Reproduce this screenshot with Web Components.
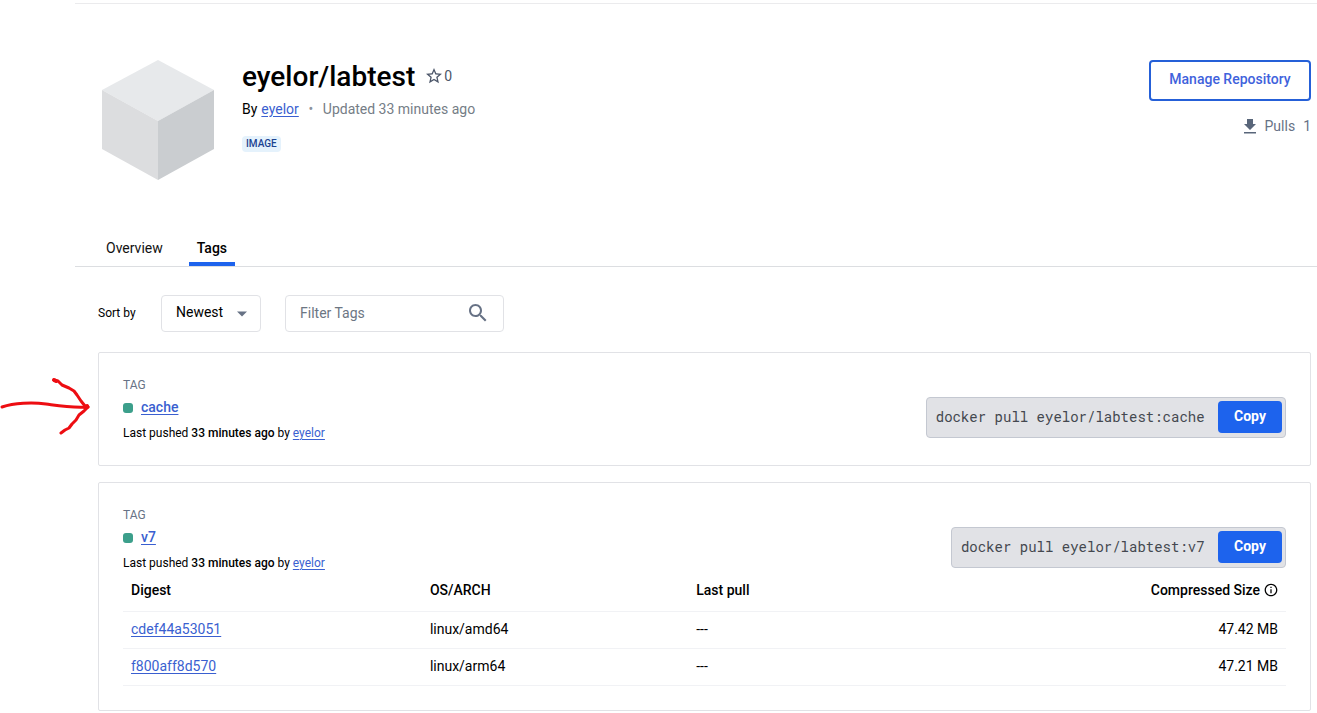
<!DOCTYPE html>
<html lang="en">
<head>
<meta charset="utf-8">
<meta name="viewport" content="width=device-width, initial-scale=1">
<title>eyelor/labtest - Tags</title>
<style>
  body {
    margin: 0;
    background: #fff;
    color: #000;
    font: 400 14px/20px Roboto, "Liberation Sans", sans-serif;
    --link: #3a5fd0;
    --brand: #1d63ed;
    --muted: #677285;
    --line: #e1e2e6;
  }
</style>
</head>
<body>
<hub-page>
  <repo-header slot="header" name="eyelor/labtest" owner="eyelor" updated="33 minutes ago" stars="0" pulls="1"></repo-header>
  <repo-tabs slot="tabs"></repo-tabs>
  <tag-toolbar></tag-toolbar>
  <tag-card tag="cache" repo="eyelor/labtest" owner="eyelor" pushed="33 minutes ago"></tag-card>
  <tag-card tag="v7" repo="eyelor/labtest" owner="eyelor" pushed="33 minutes ago">
    <digest-table></digest-table>
  </tag-card>
  <hand-arrow slot="note"></hand-arrow>
</hub-page>

<script>
class Base extends HTMLElement {
  connectedCallback() {
    if (this.shadowRoot) return;
    this.attachShadow({ mode: 'open' }).innerHTML =
      `<style>*{box-sizing:border-box} a{color:var(--link);text-underline-offset:2px}
       button,input,select{font:inherit;margin:0} svg{display:block}</style>` + this.render();
  }
  at(n) { return this.getAttribute(n); }
}

customElements.define('hub-page', class extends Base {
  render() { return `
    <style>
      :host { display: block; position: relative; padding: 3px 0 0 75px; }
      main { border-top: 1px solid #ebebed; }
      .list { display: flex; flex-direction: column; gap: 16px; padding: 28px 6px 2px 23px; }
      ::slotted(tag-toolbar) { margin-bottom: 4px; }
    </style>
    <main>
      <slot name="header"></slot>
      <slot name="tabs"></slot>
      <div class="list"><slot></slot></div>
    </main>
    <slot name="note"></slot>`; }
});

customElements.define('repo-header', class extends Base {
  render() { return `
    <style>
      :host { display: flex; align-items: flex-start; padding: 56px 6px 50px 27px; }
      .cube { width: 112px; height: 120px; flex: none; }
      .info { flex: 1; padding-left: 28px; }
      .title { display: flex; align-items: center; gap: 11px; }
      h1 { margin: 0; font-size: 28px; line-height: 34px; font-weight: 500; }
      .star { display: flex; align-items: center; gap: 2px; padding: 0 0 2px; border: 0; background: none; color: #4c5669; }
      .by { display: flex; margin: 4px 0 0; line-height: 22px; }
      .by a { margin-left: 4px; }
      .muted { color: #757d86; }
      .dot { width: 24px; text-align: center; color: #8b929c; font-size: 14px; }
      .badge { display: inline-block; margin-top: 16px; padding: 0 4px; border-radius: 4px;
        background: #e5f2fc; color: #1c4391; font-size: 10px; line-height: 16px; font-weight: 500; }
      .side { display: flex; flex-direction: column; align-items: flex-end; gap: 15px; }
      .manage { height: 41px; width: 162px; padding: 0 0 4px; border: 2px solid #2560d8; border-radius: 4px;
        background: #fff; color: #3f62dc; font-weight: 500; }
      .pulls { display: flex; align-items: center; gap: 8px; color: var(--muted); }
    </style>
    <svg class="cube" viewBox="0 0 112 120" aria-hidden="true">
      <path fill="#e7e9eb" d="M56 0l56 30-56 31L0 30z"/>
      <path fill="#dcdddf" d="M0 30l56 31v59L0 89z"/>
      <path fill="#cacdd0" d="M112 30L56 61v59l56-31z"/>
    </svg>
    <div class="info">
      <div class="title">
        <h1>${this.at('name')}</h1>
        <button class="star" aria-label="Star">
          <svg width="16" height="16" viewBox="2 2 20 20" fill="currentColor"><path d="M22 9.24l-7.19-.62L12 2 9.19 8.63 2 9.24l5.46 4.73L5.82 21 12 17.27 18.18 21l-1.63-7.03L22 9.24zM12 15.4l-3.76 2.27 1-4.28-3.32-2.88 4.38-.38L12 6.1l1.71 4.04 4.38.38-3.32 2.88 1 4.28L12 15.4z"/></svg>
          <span>${this.at('stars')}</span>
        </button>
      </div>
      <p class="by"><span>By</span><a href="#">${this.at('owner')}</a><span class="dot">•</span><span class="muted">Updated ${this.at('updated')}</span></p>
      <span class="badge">IMAGE</span>
    </div>
    <div class="side">
      <button class="manage">Manage Repository</button>
      <div class="pulls">
        <svg width="14" height="15" viewBox="0 0 14 15" fill="#59667a"><path d="M4 0h6v5h3L7 11 1 5h3zM1 13h12v1.5H1z"/></svg>
        <span>Pulls</span><span>${this.at('pulls')}</span>
      </div>
    </div>`; }
});

customElements.define('repo-tabs', class extends Base {
  render() { return `
    <style>
      :host { display: block; }
      nav { display: flex; gap: 18px; padding-left: 23px; border-bottom: 1px solid #dcdee1; }
      a { height: 36px; padding: 8px 8px 0; color: #111; text-decoration: none; border-bottom: 4px solid transparent; }
      .on { font-weight: 500; color: #000; border-color: var(--brand); }
    </style>
    <nav><a href="#">Overview</a><a class="on" href="#" aria-current="page">Tags</a></nav>`; }
});

customElements.define('tag-toolbar', class extends Base {
  render() { return `
    <style>
      :host { display: flex; align-items: center; }
      label { font-size: 12px; width: 63px; padding-bottom: 2px; }
      .box { display: grid; align-items: center; height: 37px; }
      .box > * { grid-area: 1 / 1; }
      .sort { width: 100px; }
      .filter { width: 219px; margin-left: 24px; }
      select, input { appearance: none; width: 100%; height: 37px; padding: 0 14px 3px; border: 1px solid var(--line);
        border-radius: 4px; background: #fff; color: #000; }
      input { padding-bottom: 1px; }
      input::placeholder { color: #6c7683; opacity: 1; }
      svg { justify-self: end; pointer-events: none; }
      .sort svg { margin-right: 13px; }
      .filter svg { margin: 0 14px 2px 0; }
    </style>
    <label for="sort">Sort by</label>
    <div class="box sort">
      <select id="sort"><option>Newest</option></select>
      <svg width="12" height="6" viewBox="0 0 12 6" fill="#677285"><path d="M1 .5h10l-5 5z"/></svg>
    </div>
    <div class="box filter">
      <input type="text" placeholder="Filter Tags" aria-label="Filter Tags">
      <svg width="24" height="24" viewBox="0 0 24 24" fill="#677285"><path d="M15.5 14h-.79l-.28-.27C15.41 12.59 16 11.11 16 9.500 16 5.910 13.090 3 9.500 3S3 5.910 3 9.500 5.910 16 9.500 16c1.610 0 3.090-.59 4.230-1.570l.27.28v.79l5 4.990L20.490 19l-4.990-5zm-6 0C7.010 14 5 11.990 5 9.500S7.010 5 9.500 5 14 7.010 14 9.500 11.990 14 9.500 14z"/></svg>
    </div>`; }
});

customElements.define('tag-card', class extends Base {
  render() { return `
    <style>
      :host { display: block; border: 1px solid var(--line); border-radius: 2px; padding: 24px; }
      .top { display: flex; justify-content: space-between; align-items: flex-start; height: 64px; }
      .cap { color: var(--muted); font-size: 12px; line-height: 16px; }
      .name { display: flex; align-items: center; gap: 8px; line-height: 24px; padding-top: 2px; font-weight: 500; }
      .name i { width: 10px; height: 10px; border-radius: 3px; background: #3c9f8b; }
      .name a { padding-bottom: 2px; }
      p { margin: 4px 0 0; font-size: 12px; line-height: 16px; }
      b { font-weight: 500; }
      pull-command { margin-top: 20px; }
    </style>
    <div class="top">
      <div>
        <div class="cap">TAG</div>
        <div class="name"><i></i><a href="#">${this.at('tag')}</a></div>
        <p>Last pushed <b>${this.at('pushed')}</b> by <a href="#">${this.at('owner')}</a></p>
      </div>
      <pull-command image="${this.at('repo')}:${this.at('tag')}"></pull-command>
    </div>
    <slot></slot>`; }
});

customElements.define('pull-command', class extends Base {
  render() {
    const cmd = 'docker pull ' + this.at('image');
    return `
    <style>
      :host { display: flex; align-items: center; height: 41px; padding: 0 3px 2px 9px; border: 1px solid #c4c8d1; border-radius: 4px; background: #e1e2e6; box-sizing: border-box; }
      input { width: ${cmd.length + 1}ch; padding: 0; border: 0; background: none; color: #44484f; margin-right: 5px;
        font: 14px/20px "Roboto Mono", "Liberation Mono", monospace; }
      button { width: 64px; height: 32px; padding: 0 0 2px; border: 0; border-radius: 4px; background: var(--brand); color: #fff; font-weight: 700; }
    </style>
    <input readonly aria-label="Pull command" value="${cmd}"><button>Copy</button>`; }
});

customElements.define('digest-table', class extends Base {
  render() {
    const rows = [['cdef44a53051', 'linux/amd64', '47.42 MB'], ['f800aff8d570', 'linux/arm64', '47.21 MB']];
    return `
    <style>
      :host { display: block; }
      table { width: 100%; table-layout: fixed; border-collapse: separate; border-spacing: 0; }
      th, td { padding: 0 8px; height: 37px; text-align: left; border-bottom: 1px solid #f1f2f5; }
      td { padding-bottom: 2px; }
      th { height: 41px; padding-bottom: 3px; font-weight: 500; }
      th:nth-child(1) { width: 25.7%; }
      th:nth-child(2) { width: 22.9%; }
      th:last-child, td:last-child { text-align: right; }
      .size { display: flex; justify-content: flex-end; align-items: center; gap: 4px; }
    </style>
    <table>
      <thead><tr><th>Digest</th><th>OS/ARCH</th><th>Last pull</th><th><div class="size">Compressed Size
        <svg width="14" height="14" viewBox="1 1 22 22" fill="currentColor"><path d="M11 7h2v2h-2zm0 4h2v6h-2zm1-9C6.480 2 2 6.480 2 12s4.480 10 10 10 10-4.480 10-10S17.520 2 12 2zm0 18c-4.410 0-8-3.590-8-8s3.590-8 8-8 8 3.590 8 8-3.590 8-8 8z"/></svg></div></th></tr></thead>
      <tbody>${rows.map(r => `<tr><td><a href="#">${r[0]}</a></td><td>${r[1]}</td><td>---</td><td>${r[2]}</td></tr>`).join('')}</tbody>
    </table>`; }
});

customElements.define('hand-arrow', class extends Base {
  render() { return `
    <style>:host { display: block; position: absolute; left: 0; top: 377px; pointer-events: none; }</style>
    <svg width="92" height="58" viewBox="0 0 92 58" fill="none" stroke="#ed0d12" stroke-width="3" stroke-linecap="round" stroke-linejoin="round" aria-hidden="true">
      <path d="M2 30C14 26 32 25 46 27S70 31 88 30"/>
      <path d="M54 3l4 1 4 4 7 3 5 3 3 4 4 6 4 5 3 1-4 4-5 4-3 5-4 4-3 4-4 2-4 3"/>
      <path stroke-width="4" d="M54 3l2 1M85 30l2-1"/>
    </svg>`; }
});
</script>
</body>
</html>
